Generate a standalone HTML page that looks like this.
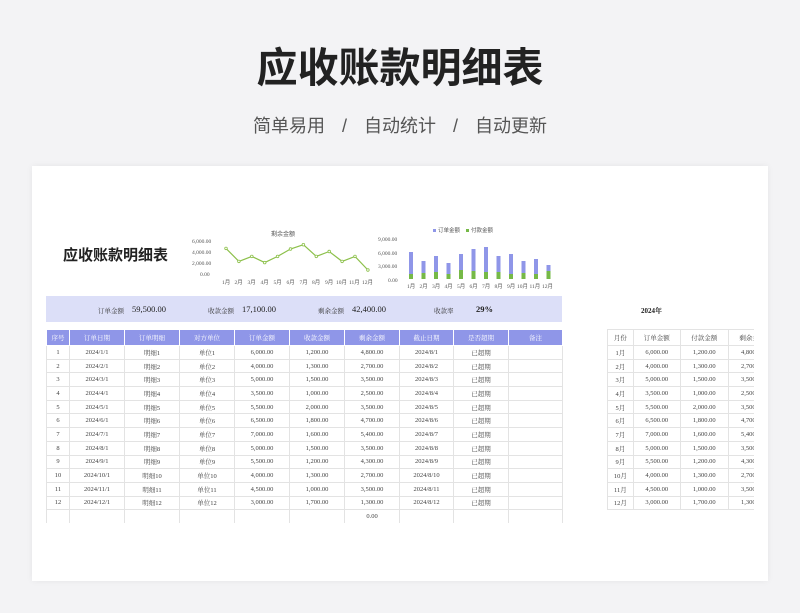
<!DOCTYPE html>
<html><head><meta charset="utf-8"><style>
*{margin:0;padding:0;box-sizing:border-box}
body{width:800px;height:613px;background:#f3f3f5;font-family:"Liberation Serif","Noto Serif CJK SC",serif;position:relative;overflow:hidden;color:#333}
.t{position:absolute;left:0;width:800px;text-align:center;top:34px;font:bold 41px "Liberation Sans","Noto Sans CJK SC",sans-serif;color:#222;letter-spacing:0px}
.s{position:absolute;left:0;width:800px;text-align:center;top:112px;font:18px "Liberation Sans","Noto Sans CJK SC",sans-serif;color:#555;word-spacing:0}
.s span{margin:0 17px}
.card{position:absolute;left:32px;top:166px;width:736px;height:415px;background:#fff;box-shadow:0 0 6px rgba(0,0,0,.06)}
.a{position:absolute}
table{border-collapse:collapse;position:absolute;table-layout:fixed}
td{font-size:6.5px;text-align:center;height:13.7px;border:1px solid #e3e3e3;color:#444;white-space:nowrap;overflow:hidden;padding:0}
.h td{background:#8f96e8;color:#fff;height:16px;border-color:#fff}
.r td{height:16px}
.band{position:absolute;left:46px;top:296px;width:516px;height:26px;background:#dcdff8;font-size:6.5px}
.band span{position:absolute;top:10px}
.band b{position:absolute;top:8px;font-size:8.5px;font-weight:normal;color:#222}
</style></head><body>
<div class="t">应收账款明细表</div>
<div class="s">简单易用<span>/</span>自动统计<span>/</span>自动更新</div>
<div class="card"></div>
<div class="a" style="left:63px;top:244px;font:bold 15px 'Noto Sans CJK SC',sans-serif;color:#222">应收账款明细表</div>
<svg class="a" style="left:0;top:0" width="800" height="300" font-size="5.5" fill="#555" font-family="Liberation Serif">
<text x="271" y="236" font-size="6">剩余金额</text>
<text x="192" y="243">6,000.00</text><text x="192" y="254">4,000.00</text><text x="192" y="265">2,000.00</text><text x="200" y="276">0.00</text>
<polyline fill="none" stroke="#8cc04a" stroke-width="1.2" points="226,248.4 238.9,261.4 251.8,256.4 264.7,262.6 277.6,256.4 290.5,249 303.4,244.7 316.3,256.4 329.2,251.5 342.1,261.4 355,256.4 367.9,270"/>
<g fill="#fff" stroke="#8cc04a" stroke-width=".8"><circle cx="226" cy="248.4" r="1.3"/><circle cx="238.9" cy="261.4" r="1.3"/><circle cx="251.8" cy="256.4" r="1.3"/><circle cx="264.7" cy="262.6" r="1.3"/><circle cx="277.6" cy="256.4" r="1.3"/><circle cx="290.5" cy="249" r="1.3"/><circle cx="303.4" cy="244.7" r="1.3"/><circle cx="316.3" cy="256.4" r="1.3"/><circle cx="329.2" cy="251.5" r="1.3"/><circle cx="342.1" cy="261.4" r="1.3"/><circle cx="355" cy="256.4" r="1.3"/><circle cx="367.9" cy="270" r="1.3"/></g>
<g><text x="222" y="284">1月</text><text x="234.5" y="284">2月</text><text x="247.5" y="284">3月</text><text x="260.5" y="284">4月</text><text x="273.5" y="284">5月</text><text x="286.5" y="284">6月</text><text x="299.5" y="284">7月</text><text x="312" y="284">8月</text><text x="325" y="284">9月</text><text x="336" y="284">10月</text><text x="349" y="284">11月</text><text x="362" y="284">12月</text></g>
<rect x="433" y="229" width="3" height="3" fill="#8f96e8"/><text x="438" y="232">订单金额</text>
<rect x="466" y="229" width="3" height="3" fill="#76b947"/><text x="471" y="232">付款金额</text>
<text x="378" y="241">9,000.00</text><text x="378" y="255">6,000.00</text><text x="378" y="268">3,000.00</text><text x="388" y="282">0.00</text>
<g fill="#8f96e8">
<rect x="409" y="252" width="4" height="27"/><rect x="421.5" y="261" width="4" height="18"/><rect x="434" y="256" width="4" height="23"/><rect x="446.5" y="263" width="4" height="16"/><rect x="459" y="254" width="4" height="25"/><rect x="471.5" y="249" width="4" height="30"/><rect x="484" y="247" width="4" height="32"/><rect x="496.5" y="256" width="4" height="23"/><rect x="509" y="254" width="4" height="25"/><rect x="521.5" y="261" width="4" height="18"/><rect x="534" y="259" width="4" height="20"/><rect x="546.5" y="265" width="4" height="14"/></g>
<g fill="#76b947">
<rect x="409" y="274" width="4" height="5"/><rect x="421.5" y="273" width="4" height="6"/><rect x="434" y="272" width="4" height="7"/><rect x="446.5" y="274" width="4" height="5"/><rect x="459" y="270" width="4" height="9"/><rect x="471.5" y="271" width="4" height="8"/><rect x="484" y="272" width="4" height="7"/><rect x="496.5" y="272" width="4" height="7"/><rect x="509" y="274" width="4" height="5"/><rect x="521.5" y="273" width="4" height="6"/><rect x="534" y="274" width="4" height="5"/><rect x="546.5" y="271" width="4" height="8"/></g>
<g><text x="407" y="288">1月</text><text x="419.5" y="288">2月</text><text x="432" y="288">3月</text><text x="444.5" y="288">4月</text><text x="457" y="288">5月</text><text x="469.5" y="288">6月</text><text x="482" y="288">7月</text><text x="494.5" y="288">8月</text><text x="507" y="288">9月</text><text x="517" y="288">10月</text><text x="529.5" y="288">11月</text><text x="542" y="288">12月</text></g>
</svg>
<div class="band"><span style="left:52px">订单金额</span><b style="left:86px">59,500.00</b><span style="left:162px">收款金额</span><b style="left:196px">17,100.00</b><span style="left:272px">剩余金额</span><b style="left:306px">42,400.00</b><span style="left:388px">收款率</span><b style="left:430px;font-weight:bold">29%</b></div>
<div class="a" style="left:641px;top:306px;font-size:7px;font-weight:bold;color:#222">2024年</div>
<table style="left:46px;top:329px;width:516px">
<colgroup><col style="width:23px"><col style="width:55px"><col style="width:55px"><col style="width:55px"><col style="width:55px"><col style="width:55px"><col style="width:55px"><col style="width:54px"><col style="width:55px"><col style="width:54px"></colgroup>
<tr class="h"><td>序号</td><td>订单日期</td><td>订单明细</td><td>对方单位</td><td>订单金额</td><td>收款金额</td><td>剩余金额</td><td>截止日期</td><td>是否超期</td><td>备注</td></tr>
<tr><td>1</td><td>2024/1/1</td><td>明细1</td><td>单位1</td><td>6,000.00</td><td>1,200.00</td><td>4,800.00</td><td>2024/8/1</td><td>已超期</td><td></td></tr>
<tr><td>2</td><td>2024/2/1</td><td>明细2</td><td>单位2</td><td>4,000.00</td><td>1,300.00</td><td>2,700.00</td><td>2024/8/2</td><td>已超期</td><td></td></tr>
<tr><td>3</td><td>2024/3/1</td><td>明细3</td><td>单位3</td><td>5,000.00</td><td>1,500.00</td><td>3,500.00</td><td>2024/8/3</td><td>已超期</td><td></td></tr>
<tr><td>4</td><td>2024/4/1</td><td>明细4</td><td>单位4</td><td>3,500.00</td><td>1,000.00</td><td>2,500.00</td><td>2024/8/4</td><td>已超期</td><td></td></tr>
<tr><td>5</td><td>2024/5/1</td><td>明细5</td><td>单位5</td><td>5,500.00</td><td>2,000.00</td><td>3,500.00</td><td>2024/8/5</td><td>已超期</td><td></td></tr>
<tr><td>6</td><td>2024/6/1</td><td>明细6</td><td>单位6</td><td>6,500.00</td><td>1,800.00</td><td>4,700.00</td><td>2024/8/6</td><td>已超期</td><td></td></tr>
<tr><td>7</td><td>2024/7/1</td><td>明细7</td><td>单位7</td><td>7,000.00</td><td>1,600.00</td><td>5,400.00</td><td>2024/8/7</td><td>已超期</td><td></td></tr>
<tr><td>8</td><td>2024/8/1</td><td>明细8</td><td>单位8</td><td>5,000.00</td><td>1,500.00</td><td>3,500.00</td><td>2024/8/8</td><td>已超期</td><td></td></tr>
<tr><td>9</td><td>2024/9/1</td><td>明细9</td><td>单位9</td><td>5,500.00</td><td>1,200.00</td><td>4,300.00</td><td>2024/8/9</td><td>已超期</td><td></td></tr>
<tr><td>10</td><td>2024/10/1</td><td>明细10</td><td>单位10</td><td>4,000.00</td><td>1,300.00</td><td>2,700.00</td><td>2024/8/10</td><td>已超期</td><td></td></tr>
<tr><td>11</td><td>2024/11/1</td><td>明细11</td><td>单位11</td><td>4,500.00</td><td>1,000.00</td><td>3,500.00</td><td>2024/8/11</td><td>已超期</td><td></td></tr>
<tr><td>12</td><td>2024/12/1</td><td>明细12</td><td>单位12</td><td>3,000.00</td><td>1,700.00</td><td>1,300.00</td><td>2024/8/12</td><td>已超期</td><td></td></tr>
<tr><td style="border-bottom:0"></td><td style="border-bottom:0"></td><td style="border-bottom:0"></td><td style="border-bottom:0"></td><td style="border-bottom:0"></td><td style="border-bottom:0"></td><td style="border-bottom:0">0.00</td><td style="border-bottom:0"></td><td style="border-bottom:0"></td><td style="border-bottom:0"></td></tr>
</table>
<div class="a" style="left:607px;top:329px;width:147px;height:190px;overflow:hidden">
<table style="left:0;top:0;width:170px">
<colgroup><col style="width:24px"><col style="width:44px"><col style="width:45px"><col style="width:45px"></colgroup>
<tr class="r"><td>月份</td><td>订单金额</td><td>付款金额</td><td>剩余金额</td></tr>
<tr><td>1月</td><td>6,000.00</td><td>1,200.00</td><td>4,800.00</td></tr>
<tr><td>2月</td><td>4,000.00</td><td>1,300.00</td><td>2,700.00</td></tr>
<tr><td>3月</td><td>5,000.00</td><td>1,500.00</td><td>3,500.00</td></tr>
<tr><td>4月</td><td>3,500.00</td><td>1,000.00</td><td>2,500.00</td></tr>
<tr><td>5月</td><td>5,500.00</td><td>2,000.00</td><td>3,500.00</td></tr>
<tr><td>6月</td><td>6,500.00</td><td>1,800.00</td><td>4,700.00</td></tr>
<tr><td>7月</td><td>7,000.00</td><td>1,600.00</td><td>5,400.00</td></tr>
<tr><td>8月</td><td>5,000.00</td><td>1,500.00</td><td>3,500.00</td></tr>
<tr><td>9月</td><td>5,500.00</td><td>1,200.00</td><td>4,300.00</td></tr>
<tr><td>10月</td><td>4,000.00</td><td>1,300.00</td><td>2,700.00</td></tr>
<tr><td>11月</td><td>4,500.00</td><td>1,000.00</td><td>3,500.00</td></tr>
<tr><td>12月</td><td>3,000.00</td><td>1,700.00</td><td>1,300.00</td></tr>
</table></div>
</body></html>
